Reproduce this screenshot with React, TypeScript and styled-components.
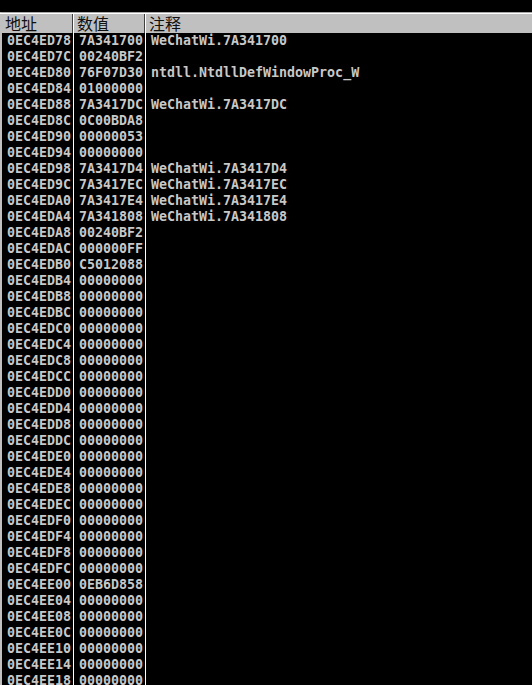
import React from "react";
import styled, { createGlobalStyle } from "styled-components";

const Global = createGlobalStyle`
  html, body { margin: 0; padding: 0; background: #000; overflow: hidden; }
  body { width: 532px; height: 685px; }
`;

const Page = styled.div`
  width: 532px;
  height: 685px;
  background: #000;
  overflow: hidden;
  padding-top: 12px;
  box-sizing: border-box;
`;

const Table = styled.div`
  border-left: 2px solid #c0c0c0;
  border-top: 1px solid #a8a8a8;
  height: 100%;
  box-sizing: border-box;
`;

const Header = styled.div`
  display: grid;
  grid-template-columns: 72px 72px 1fr;
  height: 20px;
  border-top: 1px solid #ffffff;
  background: #c0c0c0;
  margin-left: -2px;
  padding-left: 2px;
  box-sizing: border-box;
`;

const HeadCell = styled.div<{ $divider?: boolean }>`
  padding-left: 3px;
  font-family: "Noto Sans CJK SC", "Noto Sans", sans-serif;
  font-size: 16px;
  line-height: 19px;
  color: #101010;
  box-shadow: ${(p) => (p.$divider ? "inset -1px 0 #ffffff, inset -2px 0 #404040" : "none")};
  white-space: nowrap;
`;

const Row = styled.div`
  display: grid;
  grid-template-columns: 72px 72px 1fr;
  height: 16px;
`;

const Cell = styled.div<{ $divider?: boolean }>`
  padding-left: 5px;
  font-family: "DejaVu Sans Mono", "Liberation Mono", monospace;
  font-weight: bold;
  font-size: 13.3px;
  line-height: 16px;
  color: #c8c8c8;
  white-space: nowrap;
  overflow: hidden;
  border-right: ${(p) => (p.$divider ? "1px solid #ffffff" : "none")};
`;

const rows: [string, string, string][] = (() => {
  const special: Record<number, [string, string]> = {
    0xed78: ["7A341700", "WeChatWi.7A341700"],
    0xed7c: ["00240BF2", ""],
    0xed80: ["76F07D30", "ntdll.NtdllDefWindowProc_W"],
    0xed84: ["01000000", ""],
    0xed88: ["7A3417DC", "WeChatWi.7A3417DC"],
    0xed8c: ["0C00BDA8", ""],
    0xed90: ["00000053", ""],
    0xed98: ["7A3417D4", "WeChatWi.7A3417D4"],
    0xed9c: ["7A3417EC", "WeChatWi.7A3417EC"],
    0xeda0: ["7A3417E4", "WeChatWi.7A3417E4"],
    0xeda4: ["7A341808", "WeChatWi.7A341808"],
    0xeda8: ["00240BF2", ""],
    0xedac: ["000000FF", ""],
    0xedb0: ["C5012088", ""],
    0xee00: ["0EB6D858", ""],
  };
  const out: [string, string, string][] = [];
  for (let a = 0xed78; a <= 0xee18; a += 4) {
    const s = special[a] || ["00000000", ""];
    out.push(["0EC4" + a.toString(16).toUpperCase(), s[0], s[1]]);
  }
  return out;
})();

export default function App() {
  return (
    <Page>
      <Global />
      <Table>
        <Header>
          <HeadCell $divider>地址</HeadCell>
          <HeadCell $divider>数值</HeadCell>
          <HeadCell>注释</HeadCell>
        </Header>
        {rows.map(([addr, val, note]) => (
          <Row key={addr}>
            <Cell $divider>{addr}</Cell>
            <Cell $divider>{val}</Cell>
            <Cell>{note}</Cell>
          </Row>
        ))}
      </Table>
    </Page>
  );
}
